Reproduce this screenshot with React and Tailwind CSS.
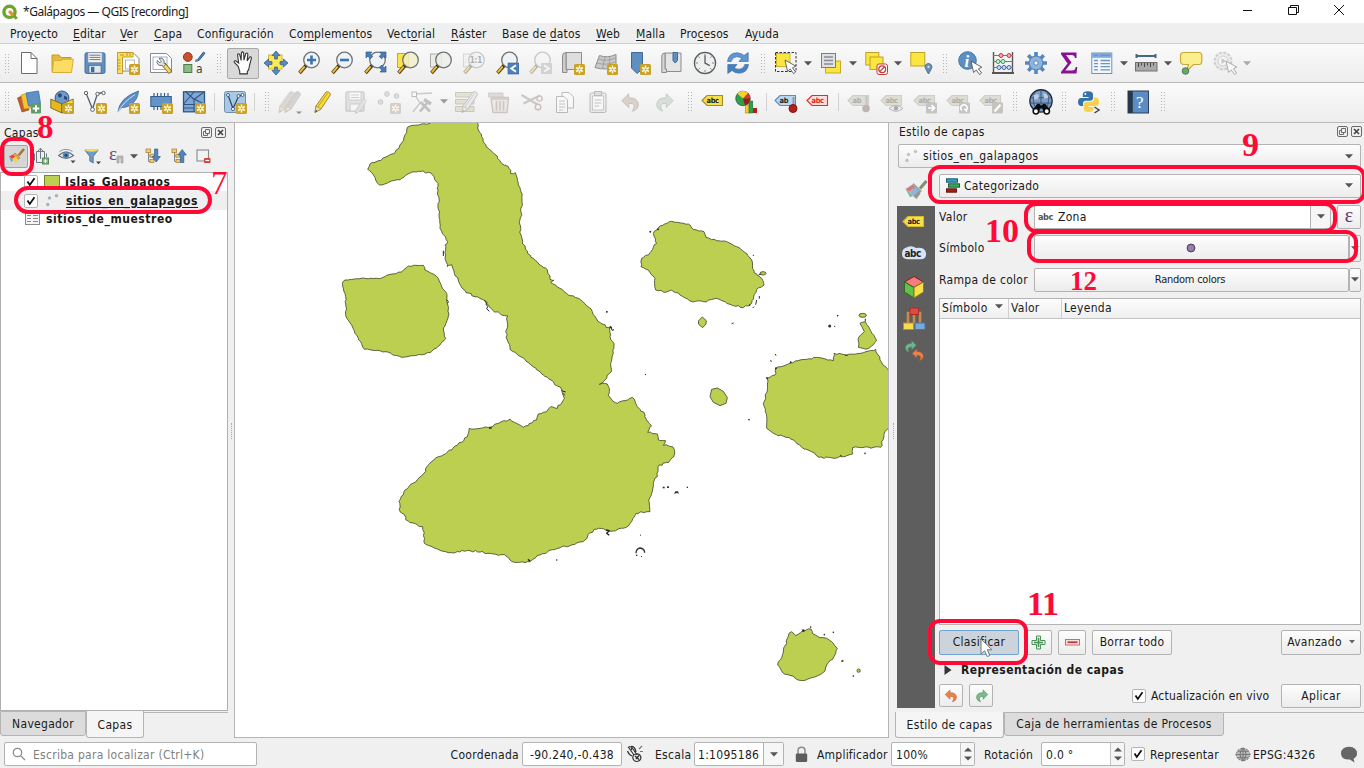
import React from "react";

/* ---------- shared drawing helpers ---------- */

const Svg = ({ children, size = 24, className = "" }) => (
  <svg width={size} height={size} viewBox="0 0 24 24" fill="none" className={"shrink-0 " + className}>
    {children}
  </svg>
);

const Star = ({ x = 13, y = 13, c = "#c9a227" }) => (
  <g transform={`translate(${x} ${y})`}>
    <rect width="11" height="11" rx="1.5" fill={c} />
    <path d="M5.5 1.6v7.8M2.1 3.5l6.8 4M8.9 3.5l-6.8 4" stroke="#fffbe0" strokeWidth="1.5" />
    <circle cx="5.5" cy="5.5" r="1" fill={c} />
  </g>
);

const Lens = ({ lens = "#eef2f4", ring = "#6f7375" }) => (
  <g>
    <path d="M9 14.5L2.5 22" stroke="#5b4310" strokeWidth="3.6" />
    <path d="M8 15.2L2.8 21.3" stroke="#f0c040" strokeWidth="1.8" />
    <path d="M9.6 13.6L8 15.6" stroke="#222" strokeWidth="3" />
    <circle cx="14.5" cy="9" r="7.8" fill={lens} fillOpacity="0.85" stroke={ring} strokeWidth="1.3" />
  </g>
);

const Pointer = ({ x = 12, y = 10 }) => (
  <path
    transform={`translate(${x} ${y})`}
    d="M0 0L2.6 11.5 5.2 9 8.6 13.6 10.6 12 7.4 7.8 10.8 6.2Z"
    fill="#fff"
    stroke="#555"
    strokeWidth="0.9"
  />
);

const Tag = ({ fill, stroke, text, children, textFill = "#222" }) => (
  <Svg>
    <path d="M1 10.5L6 5.5H21.5V15.5H6Z" fill={fill} stroke={stroke} strokeWidth="1.1" />
    <text x="5.6" y="13.2" fontFamily="DejaVu Sans, sans-serif" fontWeight="700" fontSize="7.4" letterSpacing="-0.4" fill={textFill}>
      {text}
    </text>
    {children}
  </Svg>
);

/* ---------- first toolbar icons ---------- */

const NewFile = () => (
  <Svg><path d="M4.5 1.5H14L20 7.5V22.5H4.5Z" fill="#fff" stroke="#6c6c6c" /><path d="M14 1.5V7.5H20" stroke="#6c6c6c" /></Svg>
);
const Folder = () => (
  <Svg>
    <path d="M2 20.5V4H9L11 6.5H21V10" fill="#e2ba3d" stroke="#c79a28" />
    <path d="M2.3 21.5L3.6 9.5H11.5L13.5 8.2H23.3L21.5 21.5Z" fill="#fcdc63" stroke="#d9ac35" />
  </Svg>
);
const Save = () => (
  <Svg>
    <rect x="2" y="1.8" width="20" height="20.6" rx="1.5" fill="#5f8fc0" stroke="#46719e" />
    <rect x="5" y="1.8" width="14" height="9.6" fill="#f4f4f4" stroke="#8b9aa8" strokeWidth=".7" />
    <path d="M6.5 4.2H17.5M6.5 6.4H17.5M6.5 8.6H17.5" stroke="#666" strokeWidth=".9" />
    <rect x="6" y="14.5" width="12" height="7.5" fill="#e4e7ea" stroke="#3b6190" strokeWidth=".6" />
    <rect x="8" y="15.8" width="3.4" height="5.4" fill="#3f6c9c" />
  </Svg>
);
const NewLayout = () => (
  <Svg>
    <path d="M3 2.5H18L23 7.5V20H3Z" fill="#fff" stroke="#888" />
    <path d="M1.5 1.5H17V6H6.5V22.5H1.5Z" fill="#fbe05b" stroke="#c39b2b" />
    <path d="M4 4H8M11 2V5M14 2V5M2 9H4.5M2 12H4.5M2 15H4.5M2 18H4.5" stroke="#a8821f" strokeWidth=".8" />
    <rect x="9.5" y="9" width="9" height="9" fill="#fff" stroke="#999" strokeWidth=".7" />
    <Star />
  </Svg>
);
const LayoutManager = () => (
  <Svg>
    <path d="M1.5 2.5H17.5L22.5 7.5V21.5H1.5Z" fill="#fff" stroke="#8a8a8a" />
    <rect x="4" y="6" width="14" height="12.5" stroke="#7e9fc4" strokeWidth=".8" />
    <path d="M14.5 13L21.5 21.5" stroke="#8a6914" strokeWidth="4.4" />
    <path d="M15.5 14.3L21 21" stroke="#f3d774" strokeWidth="2.8" />
    <path d="M8.3 9.5a3.6 3.6 0 0 0 4.6 4.8l1.6 1.4 2-1.9-1.6-1.7a3.6 3.6 0 0 0-5-4.6l2.6 2.6-1.6 1.8Z" fill="#e6e6e6" stroke="#666" strokeWidth=".9" />
  </Svg>
);
const StyleManager = () => (
  <Svg>
    <circle cx="5.8" cy="6" r="4.4" fill="#c8502c" stroke="#96371b" />
    <path d="M14.5 10L21.5 1 23 2.2 17 9.5Z" fill="#4b83b9" stroke="#2f5f90" />
    <path d="M13 11Q13 7.8 15.5 8 18 10.4 13 11Z" fill="#6a7fa0" />
    <rect x="1.8" y="13.5" width="8" height="8" fill="#8dbb86" stroke="#4b7d46" />
    <text x="14" y="22" fontFamily="DejaVu Sans, sans-serif" fontSize="12" letterSpacing="0" fill="#444">a</text>
  </Svg>
);
const Hand = () => (
  <Svg size={26}>
    <path
      d="M7.6 15.2L4 11.5Q3.4 9.6 5.2 10L8 12 7 4.6Q7.2 2.6 8.9 4L10.3 9.6 10.5 2.6Q11.4.8 12.6 2.6L12.9 9.4 14.5 3.3Q15.9 2 16.5 4L15.8 10 18.2 6.4Q19.8 5.8 19.7 7.8L18 14.5Q17.6 18.4 16 20V22H9V19.6Z"
      fill="#fff"
      stroke="#333"
      strokeWidth="1"
    />
  </Svg>
);
const PanSelection = () => (
  <Svg>
    <rect x="4.5" y="4" width="13.5" height="14" fill="#fcea4e" stroke="#d6b933" />
    <g fill="#5a8ac0" stroke="#35608f" strokeWidth=".8">
      <path d="M12 0L16 4.6H13.4V8H10.6V4.6H8Z" /><path d="M12 24L8 19.4H10.6V16H13.4V19.4H16Z" />
      <path d="M0 12L4.6 8V10.6H8V13.4H4.6V16Z" /><path d="M24 12L19.4 16V13.4H16V10.6H19.4V8Z" />
    </g>
  </Svg>
);
const ZoomIn = () => (<Svg><Lens /><path d="M14.5 4.5V13.5M10 9H19" stroke="#3c74ae" strokeWidth="2.6" /></Svg>);
const ZoomOut = () => (<Svg><Lens /><path d="M10 9H19" stroke="#3c74ae" strokeWidth="2.6" /></Svg>);
const ZoomFull = () => (
  <Svg>
    <Lens />
    <g fill="#4b7db4" stroke="#2e5c90" strokeWidth=".7">
      <path d="M3 1H9L7.2 2.8 9.8 5.4 7.4 7.8 4.8 5.2 3 7Z" /><path d="M23 1V7L21.2 5.2 18.6 7.8 16.2 5.4 18.8 2.8 17 1Z" />
      <path d="M23 21H17L18.8 19.2 16.2 16.6 18.6 14.2 21.2 16.8 23 15Z" />
    </g>
  </Svg>
);
const ZoomSel = () => (<Svg><rect x="1.5" y="2.5" width="11" height="14" fill="#fbe34a" stroke="#c9a72b" /><Lens lens="#f1efc8" /></Svg>);
const ZoomLayer = () => (<Svg><rect x="1.5" y="3" width="11" height="13" fill="#ececec" stroke="#a9a9a9" /><Lens lens="#ecefe9" /></Svg>);
const ZoomNative = () => (
  <Svg className="opacity-40">
    <rect x="1.5" y="3" width="11" height="13" fill="#ececec" stroke="#a9a9a9" />
    <Lens ring="#888" />
    <text x="7.8" y="12" fontFamily="DejaVu Sans, sans-serif" fontSize="8" letterSpacing="-0.2" fontWeight="700" fill="#444">1:1</text>
  </Svg>
);
const ZoomLast = () => (<Svg><Lens /><rect x="13" y="12" width="11" height="11" fill="#4f81b8" stroke="#35628f" strokeWidth=".6" /><path d="M21 14.2L16.2 17.5 21 20.8" stroke="#fff" strokeWidth="1.8" /></Svg>);
const ZoomNext = () => (<Svg className="opacity-35"><Lens /><rect x="13" y="12" width="11" height="11" fill="#999" /><path d="M16 14.2L20.8 17.5 16 20.8" stroke="#fff" strokeWidth="1.8" /></Svg>);
const NewMap = () => (
  <Svg><path d="M5 1.5H20.5V18.5H5Z" fill="#dedede" stroke="#8c8c8c" /><path d="M5 1.5Q1.5 1.5 1.5 5V21.5H6V18.5H5Z" fill="#cdcdcd" stroke="#8c8c8c" /><Star /></Svg>
);
const New3D = () => (
  <Svg>
    <path d="M1 16.5L5.5 4.5Q13 7.5 22 3.5V15Q12 20 1 16.5Z" fill="#c9c9c9" stroke="#8e8e8e" />
    <path d="M3 12Q12 15 22 10.5M4.4 8Q12 11 22 7M8.5 17.5L11 6M15 17L16 5.5" stroke="#999" strokeWidth=".8" />
    <Star />
  </Svg>
);
const NewBookmark = () => (<Svg><path d="M4.5 1.5H15.5V18L10 22.5 4.5 17Z" fill="#5f8fc0" stroke="#3d6a99" /><Star /></Svg>);
const ShowBookmarks = () => (
  <Svg>
    <path d="M5 2H21V20.5H5Z" fill="#e4e4e4" stroke="#8c8c8c" /><path d="M5 2Q1.8 2 1.8 5V21.5H6.5V18H5Z" fill="#d6d6d6" stroke="#8c8c8c" />
    <path d="M13 1.5H17.5V9.5L15.2 12 13 9.5Z" fill="#5f8fc0" stroke="#3d6a99" />
  </Svg>
);
const Clock = () => (
  <Svg>
    <circle cx="12" cy="12" r="10.6" fill="#eeefef" stroke="#555b60" strokeWidth="1.2" />
    <path d="M12 2.5V5M12 19V21.5M2.5 12H5M19 12H21.5M5.3 5.3L6.8 6.8M18.7 5.3L17.2 6.8M5.3 18.7L6.8 17.2M18.7 18.7L17.2 17.2" stroke="#888" />
    <path d="M12 4.5V12L16.8 14.6" stroke="#555b60" strokeWidth="1.3" />
  </Svg>
);
const Refresh = () => (
  <Svg>
    <path d="M1.5 10.5Q2.5 2 11 1.8 15.3 1.9 18 4.5L22.2 1.5V10.5H13L15.6 7.3Q13.5 5.6 10.5 5.8 6 6.2 5.2 10.5Z" fill="#6095cf" stroke="#3f74b0" strokeWidth=".7" />
    <path d="M22.5 13.5Q21.5 22 13 22.2 8.7 22.1 6 19.5L1.8 22.5V13.5H11L8.4 16.7Q10.5 18.4 13.5 18.2 18 17.8 18.8 13.5Z" fill="#4a7fbd" stroke="#3f74b0" strokeWidth=".7" />
  </Svg>
);
const SelectFeat = () => (
  <Svg><rect x="1.5" y="1.5" width="20.5" height="19" stroke="#333" strokeDasharray="2.5 1.5" /><rect x="2.5" y="2.5" width="13.5" height="13" fill="#fbe53f" stroke="#cdb22d" /><Pointer x={11} y={9} /></Svg>
);
const SelectValue = () => (
  <Svg><rect x="6.5" y="10" width="15" height="12" fill="#fbe53f" stroke="#c8aa2a" /><rect x="2.5" y="2.5" width="14" height="14" fill="#dfe1e4" stroke="#7a7e84" /><path d="M5 6H14M5 9.5H14M5 13H14" stroke="#888c94" strokeWidth="1.3" /></Svg>
);
const Deselect = () => (
  <Svg>
    <rect x="1.8" y="1.5" width="13" height="12.5" fill="#fbe53f" stroke="#c0a228" /><rect x="6" y="6" width="13" height="12.5" fill="#fbe53f" stroke="#c0a228" />
    <rect x="13" y="13" width="10.5" height="10.5" rx="2" fill="#fff" stroke="#c53b3b" /><circle cx="18.2" cy="18.2" r="3.4" stroke="#c53b3b" strokeWidth="1.3" /><path d="M15.8 20.6L20.6 15.8" stroke="#c53b3b" strokeWidth="1.3" />
  </Svg>
);
const SelectLoc = () => (
  <Svg><rect x="1.8" y="1.5" width="14" height="13.5" fill="#fbe53f" stroke="#c0a228" /><path d="M19.5 23L16.5 17.5A3.4 3.4 0 1 1 22.5 17.5Z" fill="#6b92b5" stroke="#48708f" /><circle cx="19.5" cy="15.8" r="1.1" fill="#dfe9f2" /></Svg>
);
const Identify = () => (
  <Svg>
    <circle cx="9.5" cy="9.5" r="8.8" fill="#5b8fc4" stroke="#4477aa" />
    <text x="6.5" y="15.5" fontFamily="Liberation Serif, serif" fontStyle="italic" fontWeight="700" fontSize="17" fill="#fff">i</text>
    <Pointer x={13} y={10} />
  </Svg>
);
const Abacus = () => (
  <Svg>
    <path d="M2.5 1V22M21.5 1V22" stroke="#555" strokeWidth="1.4" /><path d="M2 4.5H22M2 10.5H22M2 16.5H22" stroke="#777" /><path d="M1 22H23" stroke="#555" strokeWidth="2" />
    <g stroke="#c03a3a" fill="#f1b0b0"><circle cx="10" cy="4.5" r="2" /><circle cx="18" cy="4.5" r="2" /></g>
    <g stroke="#3b9350" fill="#d1eed5"><circle cx="7" cy="10.5" r="2" /><circle cx="12" cy="10.5" r="2" /></g>
    <g stroke="#3b6ba3" fill="#cadef2"><circle cx="8" cy="16.5" r="2" /><circle cx="13" cy="16.5" r="2" /><circle cx="18" cy="16.5" r="2" /></g>
  </Svg>
);
const Gear = () => (
  <Svg>
    <path d="M12 1V23M1 12H23M4.2 4.2L19.8 19.8M19.8 4.2L4.2 19.8" stroke="#5786bb" strokeWidth="3.6" />
    <circle cx="12" cy="12" r="7" fill="#8fb4dc" stroke="#5786bb" strokeWidth="1.2" /><circle cx="12" cy="12" r="2.2" fill="#f4f4f4" stroke="#5786bb" />
  </Svg>
);
const Sigma = () => (
  <Svg><path d="M4 1.5H19.5V7H18Q17.5 4 14.5 4H9L14.5 11.5 8.2 19.5H15.5Q18 19.5 18.8 16H20.3L19.5 22.5H4V21L10.6 12.5 4 3.2Z" fill="#8a1093" /></Svg>
);
const Table = () => (
  <Svg>
    <rect x="1.8" y="2" width="20" height="20.5" fill="#f3f7fb" stroke="#6c93bd" /><rect x="2" y="2" width="19.6" height="4.8" fill="#7faadb" />
    <path d="M4 4.4H8M10.5 4.4H20M4 9.5H8M10.5 9.5H20M4 12.6H8M10.5 12.6H20M4 15.7H8M10.5 15.7H20M4 18.8H8M10.5 18.8H20" stroke="#6b95c7" strokeWidth="1.3" />
  </Svg>
);
const Ruler = () => (
  <Svg><path d="M2.5 5H21.5M2.5 3V7M21.5 3V7" stroke="#45677f" strokeWidth="2" /><rect x="1.5" y="11.5" width="21.5" height="8.5" fill="#a9a9a9" stroke="#707070" /><path d="M4.5 12V16M7.5 12V14.5M10.5 12V16M13.5 12V14.5M16.5 12V16M19.5 12V14.5" stroke="#4a4a4a" /></Svg>
);
const Tip = () => (
  <Svg><path d="M5 1.5H20Q22.8 1.5 22.8 4.5V10Q22.8 13.5 20 13.5H14.5L7.5 20.5 9.5 13.5H5Q1.5 13.5 1.5 10V4.5Q1.5 1.5 5 1.5Z" fill="#fbee8c" stroke="#c7a83a" strokeWidth="1.2" /><circle cx="6.5" cy="20" r="3.3" fill="#6fa56f" stroke="#4a7b55" /></Svg>
);
const Action = () => (
  <Svg className="opacity-50"><circle cx="10" cy="10" r="8.4" fill="#e4e4e4" stroke="#aaa" strokeWidth="2" strokeDasharray="3 1.4" /><circle cx="10" cy="10" r="5" fill="#f6f6f6" stroke="#aaa" /><path d="M8.5 7L13 10 8.5 13Z" fill="#999" /><Pointer x={13} y={10} /></Svg>
);

/* ---------- second toolbar icons ---------- */

const DataSource = () => (
  <Svg>
    <path d="M.5 8L7 5 12 20 5 22Z" fill="#c65a2c" stroke="#963c16" strokeWidth=".6" /><path d="M4 5L11 3 14 18 7 19Z" fill="#f0c53a" stroke="#b98d1a" strokeWidth=".6" />
    <path d="M9 3L21.5 1 23.5 13.5 11.5 16Z" fill="#5f90c6" stroke="#3f6d9f" strokeWidth=".8" /><rect x="14" y="13.5" width="10" height="10" rx="1" fill="#5f9c6a" /><path d="M19 15.2V21.8M15.7 18.5H22.3" stroke="#fff" strokeWidth="2" />
  </Svg>
);
const GeoPackage = () => (
  <Svg>
    <circle cx="12" cy="8" r="7" fill="#6e99c8" stroke="#355b86" /><path d="M8 4Q12 2 12 6 9 9 8 6ZM14 6Q18 6 17 10L14 9Z" fill="#274b77" />
    <path d="M.8 9L12 14V23L.8 18Z" fill="#e5b91e" stroke="#6e5609" strokeWidth=".8" /><path d="M12 14L23.2 9V18L12 23Z" fill="#f7db4b" stroke="#6e5609" strokeWidth=".8" /><Star x={13} y={13} />
  </Svg>
);
const VNodes = ({ s = "#5a6268" }) => (
  <g><path d="M3 3L9.5 19 14 5Q16 2 20 3" stroke={s} strokeWidth="1.3" /><g fill="#fff" stroke={s}><circle cx="3" cy="3" r="1.7" /><circle cx="9.5" cy="19.5" r="1.9" /><circle cx="14.5" cy="4" r="1.7" /><circle cx="20.5" cy="3" r="1.7" /></g></g>
);
const Shape = () => (<Svg><VNodes /><Star /></Svg>);
const Feather = () => (
  <Svg><path d="M2 22Q3 8 22.5 1 22 10 14 15.5 9 18 5.5 17.5Z" fill="#5f8fc6" stroke="#3a679b" strokeWidth=".8" /><path d="M1.5 23Q7 12 19 4.5" stroke="#cfe0f2" strokeWidth="1" /><Star /></Svg>
);
const Chip = () => (
  <Svg><path d="M5 3V20M8.5 3V20M12 3V20M15.5 3V20M19 3V20" stroke="#335f8e" strokeWidth="1.2" /><rect x="1.8" y="6.5" width="20.5" height="10" fill="#6394c8" stroke="#335f8e" /><Star /></Svg>
);
const Mesh = () => (
  <Svg><rect x="1.5" y="1.8" width="21" height="20" fill="#7ea7d6" stroke="#2f5680" strokeWidth="1.3" /><path d="M1.5 14.5H22.5M12 14.5V22M1.5 14L12 2M4 2L12 9.5 22 2M12 14.5V9L22 14M1.5 18H12" stroke="#2f5680" strokeWidth="1.1" /><Star /></Svg>
);
const Virtual = () => (
  <Svg><rect x="1.5" y="1.5" width="21" height="21" rx="2" fill="#a9c8e6" stroke="#6f8ead" /><path d="M5 5L10 18.5 15.5 6.5 19 5" stroke="#2d4d6f" strokeWidth="1.3" /><g fill="#fff" stroke="#2d4d6f" strokeWidth=".8"><circle cx="5" cy="5" r="1.5" /><circle cx="10" cy="19" r="1.6" /><circle cx="15.5" cy="6" r="1.5" /><circle cx="19.5" cy="5" r="1.5" /></g><Star /></Svg>
);
const PencilShape = ({ x = 0, fill = "#f5d93e", edge = "#a78a1e", tip = "#333" }) => (
  <g transform={`translate(${x} 0)`}><path d="M4 22.5L5 16 15 2Q18.5 1 19.5 4.6L10 19Z" fill={fill} stroke={edge} strokeWidth="1" /><path d="M4 22.5L5 16 10 19Z" fill="#e9dcc0" stroke={edge} strokeWidth=".7" /><path d="M4 22.5L5 20 6.3 21Z" fill={tip} /><path d="M6.8 17L16.6 3.2" stroke={edge} strokeWidth=".7" /></g>
);
const CurrentEdits = () => (<Svg className="opacity-80"><PencilShape x={-3} fill="#d7d4d1" edge="#c9c5c2" tip="#bbb" /><PencilShape x={3} fill="#d0cdca" edge="#c2beba" tip="#bbb" /><path d="M18 21.5H24L21 24Z" fill="#777" /></Svg>);
const ToggleEdit = () => (<Svg><PencilShape /></Svg>);
const SaveEdits = () => (<Svg className="opacity-30"><rect x="2" y="2" width="18" height="19" rx="1" fill="#bbb" stroke="#777" strokeWidth="1.4" /><rect x="5" y="2" width="12" height="8" fill="#fff" stroke="#777" /><path d="M7 5H15M7 7.5H15" stroke="#777" /><rect x="6" y="14" width="10" height="7" fill="#fff" stroke="#777" /><g transform="translate(9 8) scale(.68)"><PencilShape fill="#ccc" edge="#666" /></g></Svg>);
const AddPoint = () => (<Svg className="opacity-80"><g fill="#d9dadb" stroke="#bcbcbc"><circle cx="3.5" cy="12" r="2.3" /><circle cx="10" cy="4" r="2.3" /><circle cx="19.5" cy="6" r="2.3" /></g><Star c="#cbc7c2" /></Svg>);
const VertexTool = () => (<Svg className="opacity-35"><path d="M4 4L22 3M4 4L10 13 3 22" stroke="#777" strokeWidth="1.3" /><rect x="2" y="2" width="4.5" height="4.5" fill="#fff" stroke="#555" /><path d="M10 21.5L17.5 12.5M10.5 12L20 21.5" stroke="#666" strokeWidth="2.6" /><path d="M14 9.5L21 14" stroke="#666" strokeWidth="3.4" /></Svg>);
const ModifyAttrs = () => (<Svg className="opacity-40"><path d="M1.5 2.5H20V7H1.5ZM1.5 9.5H20V14H1.5ZM1.5 16.5H20V21.5H1.5Z" fill="#c9c6a4" stroke="#8a8878" /><PencilShape x={4} fill="#ddd" edge="#777" /></Svg>);
const Trash = () => (<Svg className="opacity-35"><path d="M1.5 3H16V7H1.5Z" fill="#bba5a0" stroke="#99827c" /><path d="M4 9H21.5L20 22.5H6Z" fill="#dcd2cf" stroke="#8f7570" strokeWidth="1.4" /><path d="M3.5 7.5H22M9.5 11V20.5M13 11V20.5M16.5 11V20.5" stroke="#8f7570" strokeWidth="1.6" /></Svg>);
const Cut = () => (<Svg className="opacity-35"><path d="M1.5 5L17.5 14.5M3.5 13.5L20 5.5" stroke="#777" strokeWidth="2.2" /><circle cx="19.5" cy="8.5" r="2.6" stroke="#8b6060" strokeWidth="1.4" /><circle cx="18" cy="17" r="2.8" stroke="#8b6060" strokeWidth="1.4" /></Svg>);
const Copy = () => (<Svg className="opacity-40"><path d="M9 2.5H16L20.5 7V18H9Z" fill="#fff" stroke="#666" /><path d="M3.5 6.5H11L14.5 10V22.5H3.5Z" fill="#fff" stroke="#666" /><path d="M6 11H12M6 14H12M6 17H12M6 20H10" stroke="#777" /></Svg>);
const Paste = () => (<Svg className="opacity-40"><rect x="4" y="3" width="16" height="19.5" rx="1.5" fill="#ddd" stroke="#666" /><rect x="6.5" y="6" width="11" height="14" fill="#fff" stroke="#777" strokeWidth=".8" /><rect x="8.5" y="1.5" width="7" height="4" fill="#bbb" stroke="#666" /><path d="M8.5 10H15.5M8.5 13H15.5M8.5 16H13" stroke="#777" /></Svg>);
const UndoPath = ({ fill, stroke }) => (
  <path d="M2 10.5L9.5 3V7.5Q19.5 7 20 15 19.6 20.5 13.5 22 16 18.5 15.4 15.8 14.5 13 9.5 13.3V18Z" fill={fill} stroke={stroke} strokeWidth="1" />
);
const Undo = () => (<Svg size={22}><UndoPath fill="#d9d1cc" stroke="#c6bcb6" /></Svg>);
const Redo = () => (<Svg size={22}><g transform="translate(24 0) scale(-1 1)"><UndoPath fill="#d8ddd9" stroke="#c0c9c2" /></g></Svg>);
const DiagramIcon = () => (
  <Svg>
    <circle cx="9" cy="8.5" r="7.3" fill="#2ca04a" stroke="#333" strokeWidth=".6" /><path d="M9 8.5V1.2A7.3 7.3 0 0 1 16.2 8.5Z" fill="#e23131" /><path d="M9 8.5L3.4 3.8A7.3 7.3 0 0 1 14 3Z" fill="#f6d12e" /><path d="M9 8.5H16.3A7.3 7.3 0 0 1 11 15.5Z" fill="#a81717" />
    <rect x="11.5" y="15" width="3.5" height="8" fill="#f6d12e" stroke="#8a7416" strokeWidth=".5" /><rect x="15" y="11" width="3.8" height="12" fill="#2ca04a" stroke="#1d6b31" strokeWidth=".5" /><rect x="19" y="18" width="4" height="5" fill="#b91c1c" />
  </Svg>
);
const LabelYellow = () => <Tag fill="#f7de4b" stroke="#a48b22" text="abc" />;
const LabelPin = () => (<Tag fill="#b9d6f3" stroke="#5d8cbd" text="ab"><path d="M19.5 7V15" stroke="#999" strokeWidth="2" /><circle cx="19" cy="18.5" r="4" fill="#b32020" stroke="#821212" /></Tag>);
const LabelRed = () => <Tag fill="#ffdcdc" stroke="#e22b2b" text="abc" textFill="#e01b1b" />;
const GrayTag = ({ kind }) => (
  <Tag fill="#dddcd5" stroke="#cfcec7" text={kind === "pin" ? "ab" : "abc"} textFill="#aeada8">
    {kind === "pin" && <><path d="M19.5 6V15" stroke="#c4c4c4" strokeWidth="2" /><circle cx="19" cy="18.5" r="3.8" fill="#c2b3b3" /></>}
    {kind === "eye" && <><path d="M9 18.5Q16 12.5 23 18.5 16 24 9 18.5Z" fill="#eee" stroke="#b5b5b5" /><circle cx="16" cy="18.3" r="2.2" fill="#aaa" /></>}
    {kind === "move" && <><rect x="13" y="12.5" width="11" height="11" rx="1" fill="#c4c4c4" /><path d="M15 18H21M18.5 15L21.5 18 18.5 21" stroke="#fff" strokeWidth="1.7" /></>}
    {kind === "rotate" && <><rect x="13" y="12.5" width="11" height="11" rx="1" fill="#c4c4c4" /><path d="M16 20.5A3.2 3.2 0 1 1 20.5 20V22M18 19.5H21" stroke="#fff" strokeWidth="1.5" /></>}
    {kind === "edit" && <><rect x="13" y="12.5" width="11" height="11" rx="1" fill="#c6c4be" /><path d="M15.5 21.5L21.5 14.8" stroke="#fff" strokeWidth="2.2" /></>}
  </Tag>
);
const MetaSearch = () => (
  <Svg size={26}>
    <circle cx="12" cy="11" r="10.3" fill="#7c9dc4" stroke="#1e2c3e" strokeWidth="1.2" />
    <path d="M2.5 8H21.5M2 13H22M12 1V15M6 3Q3.5 9 6 16M18 3Q20.5 9 18 16" stroke="#36506f" strokeWidth=".8" />
    <path d="M5 6Q9 3 10 6T6 10ZM14 4Q18 4 19 8L15 9Z" fill="#b9cde4" />
    <path d="M8.5 13.5H10.5L11.5 15H13L14 13.5H16L20.5 19.5 15 21.5 13 18H11.5L9.5 21.5 4 19.5Z" fill="#0b0b0b" />
    <circle cx="7.3" cy="20.6" r="2.5" fill="#fff" stroke="#0b0b0b" strokeWidth="1.4" /><circle cx="17.3" cy="20.6" r="2.5" fill="#fff" stroke="#0b0b0b" strokeWidth="1.4" />
  </Svg>
);
const Python = () => (
  <Svg>
    <path d="M11 1.2Q5.8 1.2 5.8 4.2V7H11.5V8H3.6Q1 8.4 1 12T3.8 16H6V13.4Q6 11 8.8 10.8H13.2Q16 10.4 16 8V4.2Q15.8 1.2 11 1.2Z" fill="#3572a5" /><circle cx="8.4" cy="4" r="1" fill="#fff" />
    <path d="M11.5 22Q6.8 22 6.8 19V15Q6.8 12 9.8 11.8H14Q17 11.5 17 8.5V7.5H19Q22 8 22 12T18.8 16H11.5V17H16.5V19Q16.2 22 11.5 22Z" fill="#fad14a" />
    <path d="M17.5 17L22 20 17.5 23" stroke="#444" strokeWidth="1.5" />
  </Svg>
);
const Help = () => (
  <Svg><rect x="2" y="1" width="20.5" height="22" fill="#5b8dc4" stroke="#2a3f58" /><rect x="2" y="1" width="4.8" height="22" fill="#28384c" /><text x="10" y="17.5" fontFamily="Liberation Serif, serif" fontSize="17" fill="#fff">?</text></Svg>
);

/* ---------- toolbar pieces ---------- */

const Handle = ({ className }) => (
  <div className={"flex h-6 shrink-0 items-center justify-center " + className}>
    <svg width="5" height="19" viewBox="0 0 5 19">
      {[0, 3, 6, 9, 12, 15, 18].map((y) => (
        <g key={y} fill="#b5b5b5"><rect x="0" y={y} width="1" height="1" /><rect x="3" y={y} width="1" height="1" /></g>
      ))}
    </svg>
  </div>
);
const Cell = ({ children, className = "w-[33px]" }) => <div className={"flex shrink-0 items-center justify-center " + className}>{children}</div>;
const Tri = ({ className = "w-3", fill = "#555" }) => (
  <div className={"flex shrink-0 items-center justify-center " + className}>
    <svg width="8" height="5" viewBox="0 0 8 5"><path d="M0 .3H8L4 4.6Z" fill={fill} /></svg>
  </div>
);
const Sep = ({ className }) => <div className={"flex shrink-0 justify-center " + className}><div className="h-[18px] w-px bg-[#d2d2d2]" /></div>;

const menu = [
  ["Pro", "y", "ecto", "w-[63px]"],
  ["", "E", "ditar", "w-[47px]"],
  ["", "V", "er", "w-[34px]"],
  ["", "C", "apa", "w-[43px]"],
  ["Confi", "g", "uración", "w-[92px]"],
  ["Co", "m", "plementos", "w-[98px]"],
  ["Vect", "o", "rial", "w-[64px]"],
  ["", "R", "áster", "w-[51px]"],
  ["Base de ", "d", "atos", "w-[94px]"],
  ["", "W", "eb", "w-[40px]"],
  ["", "M", "alla", "w-[44px]"],
  ["Pro", "c", "esos", "w-[65px]"],
  ["A", "y", "uda", "w-[40px]"],
];

const DockButtons = ({ className }) => (
  <div className={"flex gap-[3px] " + className}>
    <svg width="11" height="11" viewBox="0 0 11 11" fill="none" stroke="#6a6a6a"><rect x=".5" y=".5" width="10" height="10" rx="1.5" /><path d="M4.5 2.5H8.5V6.5H4.5ZM4.5 4.5H2.5V8.5H6.5V6.5" /></svg>
    <svg width="11" height="11" viewBox="0 0 11 11" fill="none" stroke="#6a6a6a"><rect x=".5" y=".5" width="10" height="10" rx="1.5" /><path d="M3 3L8 8M8 3L3 8" stroke="#444" strokeWidth="1.7" /></svg>
  </div>
);

const Check = () => (
  <span className="flex h-[14px] w-[14px] shrink-0 items-center justify-center rounded-[2px] border border-[#b4b4b4] bg-white">
    <svg width="10" height="10" viewBox="0 0 10 10" fill="none"><path d="M1.5 4.5L3.8 8 8.5 1.2" stroke="#111" strokeWidth="1.8" /></svg>
  </span>
);

/* ---------- left dock ---------- */

const LayersPanel = () => (
  <div className="flex w-[228px] shrink-0 flex-col">
    <div className="flex h-[19px] items-center justify-between pl-1 pr-[2px]">
      <span>Capas</span>
      <DockButtons className="-mt-px" />
    </div>
    <div className="flex h-[28px] items-center pl-1">
      <div className="flex h-[23px] w-[24px] items-center justify-center rounded-[2px] border border-[#a2a2a2] bg-[#d6d6d6]">
        <svg width="17" height="17" viewBox="0 0 17 17"><path d="M16 1L10.5 7.5" stroke="#a8762f" strokeWidth="2.6" /><path d="M7 5L12 10 9 12 4.5 8Z" fill="#e2a345" stroke="#996520" strokeWidth=".5" /><path d="M1 8.5L5 6.5 8 10 6 12Z" fill="#e24b3a" /><path d="M4 11L7.5 8.5 10.5 12 7.5 15Z" fill="#f4d24a" /><path d="M1 8.5L5 12 3.5 14Z" fill="#6a93d8" /></svg>
      </div>
      <Cell className="w-[26px]"><svg width="16" height="18" viewBox="0 0 16 18" fill="none" stroke="#6b7a85"><path d="M3.5 4.5V15.5H11.5V4.5ZM1.5 6.5V13.5M13.5 6.5V10M7.5 1.5V12M5 4L7.5 1.2 10 4" /><rect x="9.5" y="11" width="6" height="6" fill="#7fb286" stroke="#558a5d" /><path d="M12.5 12.2V15.8M10.7 14H14.3" stroke="#fff" /></svg></Cell>
      <Cell className="w-[26px]"><svg width="18" height="16" viewBox="0 0 18 16" fill="none"><path d="M.7 7.5Q8 .5 15.5 7.5 8 13.5.7 7.5Z" fill="#eef2f6" stroke="#667784" strokeWidth="1.2" /><circle cx="8" cy="7.3" r="3.3" fill="#5f88b4" /><circle cx="8" cy="7.3" r="1.4" fill="#26425e" /><path d="M1.5 3.5Q8-.8 14.5 3.5" stroke="#8b98a3" /><path d="M12.5 12.5H17.5L15 15.2Z" fill="#444" /></svg></Cell>
      <Cell className="w-[25px]"><svg width="17" height="17" viewBox="0 0 17 17"><path d="M.8 2H14.2L9.2 8.5V15L5.8 13V8.5Z" fill="#6f9ccb" stroke="#41698f" strokeWidth=".8" /><ellipse cx="7.5" cy="2.3" rx="6.6" ry="1.5" fill="#f1d862" /><path d="M12 13.5H17L14.5 16.2Z" fill="#444" /></svg></Cell>
      <div className="flex w-[23px] items-center justify-center">
        <span className="-mt-1 text-[19px] leading-[18px] tracking-normal text-[#6d4a78] [font-family:'Liberation_Serif',serif]">ε</span>
        <svg className="-ml-px mt-[7px]" width="8" height="9" viewBox="0 0 8 9"><path d="M1 1H7V8H5V3H3V8H1Z" fill="#bbb" stroke="#999" strokeWidth=".6" /></svg>
      </div>
      <Tri className="w-[12px]" />
      <Cell className="w-[26px]"><svg width="16" height="16" viewBox="0 0 16 16"><path d="M3.5 3V13.5H6M3.5 8H6" stroke="#888" fill="none" /><rect x="1" y="1" width="4.5" height="3.6" fill="#f2cf73" stroke="#a8863a" strokeWidth=".8" /><rect x="5" y="6.2" width="4" height="3" fill="#f2cf73" stroke="#a8863a" strokeWidth=".8" /><rect x="5" y="11.5" width="4" height="3" fill="#f2cf73" stroke="#a8863a" strokeWidth=".8" /><path d="M9.5 1H12.8V8.5H15.4L11.2 14 7 8.5H9.5Z" fill="#5483b5" stroke="#34608e" strokeWidth=".7" /></svg></Cell>
      <Cell className="w-[25px]"><svg width="16" height="16" viewBox="0 0 16 16"><path d="M3.5 3V13.5H6M3.5 8H6" stroke="#888" fill="none" /><rect x="1" y="1" width="4.5" height="3.6" fill="#f2cf73" stroke="#a8863a" strokeWidth=".8" /><rect x="5" y="6.2" width="4" height="3" fill="#f2cf73" stroke="#a8863a" strokeWidth=".8" /><rect x="5" y="11.5" width="4" height="3" fill="#f2cf73" stroke="#a8863a" strokeWidth=".8" /><path d="M9.5 14.5H12.8V7H15.4L11.2 1.5 7 7H9.5Z" fill="#5483b5" stroke="#34608e" strokeWidth=".7" /></svg></Cell>
      <Cell className="w-[24px]"><svg width="15" height="15" viewBox="0 0 15 15"><rect x="1" y="1" width="11.5" height="11" fill="#f2f2f2" stroke="#8a8a8a" strokeWidth="1.1" /><rect x="8" y="9" width="6.5" height="5" rx="1" fill="#d23a3a" /><path d="M9.3 11.5H13.3" stroke="#fff" strokeWidth="1.3" /></svg></Cell>
    </div>
    <div className="mt-[2px] h-[539px] border border-[#b0b0b0] bg-white font-bold tracking-[0.57px]">
      <div className="flex h-[18px] items-center overflow-hidden pl-[23px]">
        <Check />
        <span className="ml-[6px] mr-[5px] h-[15px] w-[16px] border border-[#76822f] bg-[#bccf51]" />
        <span>Islas_Galapagos</span>
      </div>
      <div className="flex h-[19px] items-center bg-[#efefef] pl-[23px]">
        <Check />
        <svg className="ml-[6px] mr-[5px]" width="17" height="14" viewBox="0 0 17 14" fill="#a7bccb" stroke="#8197a8" strokeWidth=".6"><circle cx="5.5" cy="4" r="1.3" /><circle cx="12.5" cy="1.8" r="1.3" /><circle cx="3.8" cy="10.5" r="1.3" /></svg>
        <span className="underline underline-offset-2">sitios_en_galapagos</span>
      </div>
      <div className="flex h-[17px] items-center pl-[24px]">
        <svg className="mr-[6px]" width="15" height="13" viewBox="0 0 15 13" fill="none" stroke="#8a8a8a"><rect x=".5" y=".5" width="14" height="12" fill="#f4f4f4" /><path d="M2 3.5H6M8 3.5H13M2 6.5H6M8 6.5H13M2 9.5H6M8 9.5H13" /></svg>
        <span>sitios_de_muestreo</span>
      </div>
    </div>
    <div className="flex h-[27px] items-start">
      <div className="flex h-[25px] w-[86px] items-center justify-center rounded-b-[3px] border border-[#b5b5b5] bg-[#dcdcdc]">Navegador</div>
      <div className="flex h-[27px] w-[58px] items-center justify-center rounded-b-[3px] border border-t-0 border-[#b5b5b5] bg-[#f5f5f5] pt-[2px]">Capas</div>
      <div className="mt-px h-px flex-1 bg-[#b5b5b5]" />
    </div>
  </div>
);

/* ---------- map canvas ---------- */

const isabela = "442 0 445 30 455 50 460 66 475 85 495 103 515 130 535 140 542 160 556 158 562 175 565 195 573 215 576 245 574 280 568 308 573 345 578 372 592 393 610 415 635 438 652 450 660 468 660 478 672 480 662 487 690 505 720 527 745 535 765 552 787 575 800 597 828 622 843 618 840 650 848 665 852 685 850 700 844 725 844 755 830 775 808 793 818 790 832 792 838 805 834 825 848 843 862 850 885 842 907 832 922 860 945 885 950 900 965 918 953 937 982 942 985 960 1007 962 1000 976 1028 980 1034 1002 1015 1028 987 1035 982 1070 970 1090 965 1120 956 1140 960 1175 918 1180 895 1218 850 1233 805 1225 792 1228 765 1260 718 1278 695 1280 630 1305 600 1325 585 1328 545 1324 528 1308 480 1300 420 1292 355 1298 315 1285 283 1270 278 1220 240 1208 210 1175 207 1145 225 1110 275 1068 298 1032 325 1010 365 990 412 950 418 925 480 922 505 910 540 897 580 922 620 900 625 882 650 875 662 860 682 865 703 835 695 810 670 785 640 765 585 718 540 688 532 660 529 630 533 588 515 585 490 572 465 543 435 530 408 518 388 490 373 460 366 435 352 440 345 415 345 375 353 365 330 325 327 290 324 190 312 170 295 157 265 154 245 157 215 175 185 183 148 195 135 172 113 148 120 132 165 112 195 98 210 75 230 38 232 22 250 16 300 10 300 0";
const fernandina = "37 490 45 480 80 476 155 474 180 463 215 456 235 438 280 436 285 450 310 462 325 475 335 500 350 520 352 550 357 582 348 610 340 630 347 655 330 675 300 698 250 707 215 712 165 695 103 688 92 665 75 640 65 615 48 590 47 530";
const santiago = "70 70 90 48 125 34 175 42 190 58 222 65 228 82 260 92 290 95 320 110 350 130 365 150 372 188 395 205 402 225 380 238 365 280 340 293 300 283 260 265 220 275 180 273 150 255 125 240 105 247 77 240 75 205 55 180 33 170 35 145 55 135 80 100";
const santaCruz = "437 475 475 462 510 450 560 442 610 452 612 430 650 435 700 428 737 418 750 450 775 480 800 500 800 640 776 655 765 665 752 712 668 713 668 732 612 745 567 742 545 725 515 712 490 690 430 670 410 655 410 620 400 580 412 540 412 505 435 495";
const baltra = "690 340 706 335 722 362 740 392 725 408 708 418 685 412 686 382 703 365";
const floreana = "72 55 80 50 92 62 112 48 138 42 142 55 165 68 185 70 205 85 217 100 207 125 185 150 180 168 158 182 120 196 95 193 78 182 52 172 38 150 50 128 55 105 62 90";

const coast = (text, amp) => {
  const n = text.split(" ").map(Number);
  const pts = [];
  for (let i = 0; i < n.length; i += 2) pts.push([n[i], n[i + 1]]);
  let seed = 7;
  const rnd = () => {
    seed = (seed * 16807) % 2147483647;
    return seed / 2147483647 - 0.5;
  };
  const out = [];
  pts.forEach(([x, y], i) => {
    const [nx, ny] = pts[(i + 1) % pts.length];
    const steps = Math.max(1, Math.round(Math.hypot(nx - x, ny - y) / 8));
    for (let k = 0; k < steps; k++) {
      const j = k === 0 ? 0 : amp;
      out.push(`${(x + ((nx - x) * k) / steps + rnd() * j).toFixed(1)} ${(y + ((ny - y) * k) / steps + rnd() * j).toFixed(1)}`);
    }
  });
  return "M" + out.join("L") + "Z";
};

const MapCanvas = () => (
  <div className="w-[655px] shrink-0 border-b border-l border-r border-[#b5b5b5] bg-white">
    <svg width="653" height="615" viewBox="235 123 653 615" fill="#bccf51" stroke="#3c4322" strokeWidth="2.4" strokeLinejoin="round">
      <g transform="translate(330 120) scale(.33333)">
        <path d={coast(isabela, 6)} />
        <path d={coast(fernandina, 4)} />
        <path d="M463 540l8 8-3 4 5 8-3 6 8 8M838 625l6-4 2 10 6-2M340 392v16M350 540l5 4-2 6M695 812l12 4M700 820l4 6" fill="none" stroke="#222" strokeWidth="3" />
        <path d="M828 1230l10 2-8 8 8 6M477 924h8M594 1318l6 6" fill="none" stroke="#222" strokeWidth="4" />
        <path d="M918 1300q0-14 12-16 14 2 14 14" fill="none" stroke="#333" strokeWidth="4" />
        <g fill="#333" stroke="none">
          <rect x="828" y="573" width="5" height="5" /><rect x="945" y="762" width="3" height="3" /><rect x="998" y="1100" width="6" height="5" /><rect x="1011" y="1099" width="6" height="5" /><rect x="1070" y="1100" width="4" height="4" /><path d="M1032 1122l4-8h8l3 7-6-2z" /><rect x="930" y="1244" width="3" height="3" /><rect x="678" y="1318" width="4" height="4" /><rect x="918" y="1304" width="4" height="4" /><rect x="933" y="1308" width="3" height="3" />
        </g>
      </g>
      <g transform="translate(630 210) scale(.33333)">
        <path d={coast(santiago, 5)} />
        <path d={coast(santaCruz, 5)} />
        <path d={coast(baltra, 3)} />
        <ellipse cx="698" cy="316" rx="11" ry="6" /><ellipse cx="399" cy="190" rx="9" ry="5" /><path d="M217 321L229 332 228 342 218 353 206 343 205 333Z" /><path d="M245 538L262 534 280 544 292 563 288 580 270 587 250 577 240 560Z" />
        <path d="M388 258v8M380 270l-3 14M372 290l-4 4M362 284l-6 4M386 194l8-2M305 341l6-2M420 452l6 2M436 432l2 5M706 326v8M630 735l6 4M645 436h8" fill="none" stroke="#333" strokeWidth="3" />
        <g fill="#333" stroke="none"><circle cx="599" cy="348" r="4.5" /><circle cx="623" cy="317" r="2.5" /><circle cx="614" cy="349" r="2" /><circle cx="357" cy="629" r="2.5" /><circle cx="370" cy="136" r="2" /><circle cx="61" cy="65" r="3" /><circle cx="84" cy="58" r="3" /><circle cx="482" cy="457" r="3" /><circle cx="438" cy="475" r="3" /><circle cx="411" cy="504" r="3" /><circle cx="705" cy="730" r="2.5" /><circle cx="46" cy="493" r="1.5" /></g>
      </g>
      <g transform="translate(765 615) scale(.33333)">
        <path d={coast(floreana, 5)} />
        <circle cx="281" cy="167" r="5" /><path d="M229 140l6-4" strokeWidth="5" />
        <g fill="#333" stroke="none"><circle cx="137" cy="36" r="2.5" /><circle cx="178" cy="59" r="2.5" /><circle cx="205" cy="52" r="2.5" /><circle cx="265" cy="183" r="2.5" /><circle cx="115" cy="47" r="4" /></g>
      </g>
    </svg>
  </div>
);

/* ---------- right dock ---------- */

const btn = "flex items-center justify-center rounded-[2px] border border-[#b3b3b3] bg-linear-to-b from-[#fdfdfd] to-[#ececec]";

const VTabs = () => (
  <div className="flex w-[38px] shrink-0 flex-col">
    <div className="flex h-[37px] items-center justify-center pt-[6px]">
      <svg width="24" height="22" viewBox="0 0 24 22"><path d="M22.5 2L16 9.5" stroke="#7d8f78" strokeWidth="3" /><path d="M9.5 4L18 12 15 15 7 8Z" fill="#9aa79a" /><path d="M1.5 10L8.5 5.5 11 9 5 13Z" fill="#d47c83" /><path d="M5 13L12 8.5 15 12 9 17Z" fill="#8fb5d8" /><path d="M9 17L15 12 16.5 14.5 12.5 20Z" fill="#98978e" /><path d="M1.5 10L9 17 6 18Z" fill="#7eb28a" /></svg>
    </div>
    <div className="flex flex-1 flex-col items-center bg-[#5e5e5e] pr-[5px] pt-px">
      <Cell className="h-[32px]"><Tag fill="#f7de4b" stroke="#d8b92c" text="abc" /></Cell>
      <Cell className="h-[32px]"><Svg size={26}><path d="M4 5.5Q9 2.5 14 5.5 22 4.5 23 10 24 15.5 18 16H6Q.5 15 1 10.5 1 6.5 4 5.5Z" fill="#d8e4f4" /><text x="3.2" y="13.8" fontFamily="DejaVu Sans, sans-serif" fontWeight="700" fontSize="9.2" letterSpacing="-0.4" fill="#222">abc</text></Svg></Cell>
      <Cell className="h-[32px]"><Svg><path d="M12 1.5L21.5 7 12 12.5 2.5 7Z" fill="#f27d7d" stroke="#8e1b1b" /><path d="M2.5 7L12 12.5V23L2.5 17Z" fill="#63c04b" stroke="#2b6d20" /><path d="M21.5 7L12 12.5V23L21.5 17Z" fill="#f6e04a" stroke="#8f7c15" /></Svg></Cell>
      <Cell className="h-[33px]"><Svg><path d="M12 3V17M6 17V6H18V17" stroke="#c98a4b" strokeWidth="2.6" /><rect x="8" y="1" width="8.5" height="6.5" fill="#e04b45" stroke="#a02d28" /><rect x="1.5" y="16" width="10" height="6.5" fill="#f6da4f" stroke="#b2942b" /><rect x="13" y="16" width="10" height="6.5" fill="#79a8dd" stroke="#4474aa" /></Svg></Cell>
      <Cell className="h-[31px]"><Svg><g transform="translate(1 0) scale(.6)"><g transform="translate(24 0) scale(-1 1)"><UndoPath fill="#6fb592" stroke="#4d8d6d" /></g></g><g transform="translate(9 8) scale(.62)"><UndoPath fill="#e8824a" stroke="#b35a28" /></g></Svg></Cell>
    </div>
  </div>
);

const StylePanel = () => (
  <div className="flex w-[467px] shrink-0 flex-col">
    <div className="flex h-[19px] items-center justify-between pl-[2px] pr-[2px]">
      <span>Estilo de capas</span>
      <DockButtons className="-mt-px" />
    </div>
    <div className="ml-px mr-[3px] mt-[2px] flex h-[24px] shrink-0 items-center rounded-[2px] border border-[#b3b3b3] bg-linear-to-b from-[#fdfdfd] to-[#ececec] pl-[6px] pt-px">
      <svg width="14" height="14" viewBox="0 0 14 14" fill="#ccc" stroke="#aaa" strokeWidth=".7"><circle cx="3.5" cy="5.5" r="1.2" /><circle cx="10.5" cy="2.5" r="1.2" /><circle cx="2" cy="11.5" r="1.2" /></svg>
      <span className="ml-[4px] tracking-[0.4px]">sitios_en_galapagos</span>
      <Tri className="ml-auto mr-1 w-[14px]" />
    </div>
    <div className="flex h-[541px] pt-px">
      <VTabs />
      <div className="flex flex-1 flex-col pl-[4px] pr-[3px]">
        <div className="mt-[5px] flex h-[24px] shrink-0 items-center rounded-[2px] border border-[#b3b3b3] bg-linear-to-b from-[#fdfdfd] to-[#ececec] pl-[6px]">
          <svg width="14" height="15" viewBox="0 0 14 15"><rect x=".5" y=".8" width="11" height="3.4" fill="#2d9fc6" stroke="#15506b" strokeWidth=".9" /><rect x="2.5" y="5.8" width="11" height="3.4" fill="#38a860" stroke="#164f2a" strokeWidth=".9" /><rect x=".5" y="10.8" width="10" height="3.4" fill="#a32014" stroke="#57100a" strokeWidth=".9" /></svg>
          <span className="ml-[4px]">Categorizado</span>
          <Tri className="ml-auto mr-1 w-[14px]" />
        </div>
        <div className="mt-[7px] flex h-[24px] shrink-0 items-center">
          <span className="w-[95px]">Valor</span>
          <div className="flex h-[24px] w-[297px] items-center rounded-[2px] border border-[#b3b3b3] bg-white">
            <span className="ml-[3px] w-[20px] text-[9px] font-bold tracking-[-0.4px] text-[#555]">abc</span>
            <span>Zona</span>
            <div className="ml-auto flex h-full w-[20px] items-center justify-center border-l border-[#b3b3b3] bg-[#f6f6f6]"><Tri /></div>
          </div>
          <div className={btn + " ml-auto h-[24px] w-[24px]"}><span className="-mt-[3px] text-[20px] leading-none text-[#5b3a68] [font-family:'Liberation_Serif',serif]">ε</span></div>
        </div>
        <div className="mt-[6px] flex h-[27px] shrink-0 items-center">
          <span className="w-[95px]">Símbolo</span>
          <div className={btn + " h-[27px] w-[315px] pr-[2px]"}><svg width="10" height="10" viewBox="0 0 10 10"><circle cx="5" cy="5" r="3.9" fill="#9a7cb4" stroke="#453a4e" /></svg></div>
          <div className={btn + " h-[27px] w-[12px]"}><Tri className="w-2" /></div>
        </div>
        <div className="mt-[6px] flex h-[24px] shrink-0 items-center">
          <span className="w-[95px] whitespace-nowrap">Rampa de color</span>
          <div className={btn + " h-[24px] w-[315px] pr-[3px] text-[11px] tracking-[-0.25px]"}>Random colors</div>
          <div className={btn + " h-[24px] w-[12px]"}><Tri className="w-2" /></div>
        </div>
        <div className="mt-[6px] flex h-[327px] shrink-0 flex-col border border-[#b3b3b3] bg-white">
          <div className="flex h-[20px] shrink-0 items-center border-b border-[#c4c4c4] bg-linear-to-b from-[#fdfdfd] to-[#efefef]">
            <div className="flex h-full w-[69px] items-center border-r border-[#cfcfcf] pl-[2px]">Símbolo<Tri className="mb-[3px] ml-[7px]" /></div>
            <div className="flex h-full w-[53px] items-center border-r border-[#cfcfcf] pl-[2px]">Valor</div>
            <div className="pl-[2px]">Leyenda</div>
          </div>
        </div>
        <div className="mt-[5px] flex h-[25px] shrink-0">
          <div className="flex w-[80px] items-center justify-center rounded-[2px] border border-[#6ea3d4] bg-[#ccd3da]">Clasificar</div>
          <div className={btn + " ml-[5px] w-[28px]"}><svg width="15" height="15" viewBox="0 0 15 15"><path d="M5.5 1H9.5V5.5H14V9.5H9.5V14H5.5V9.5H1V5.5H5.5Z" fill="#e4f2e4" stroke="#4c9157" /><path d="M7.5 3V12M3 7.5H12" stroke="#4c9157" strokeWidth="1.6" /></svg></div>
          <div className={btn + " ml-[6px] w-[28px]"}><svg width="15" height="7" viewBox="0 0 15 7"><rect x=".5" y=".5" width="14" height="5.5" fill="#fbe2e2" stroke="#d96767" /><path d="M2.5 3.2H12.5" stroke="#c93b3b" strokeWidth="1.8" /></svg></div>
          <div className={btn + " ml-[6px] w-[80px]"}>Borrar todo</div>
          <div className={btn + " ml-auto w-[80px]"}>Avanzado<svg className="ml-[7px]" width="6" height="4" viewBox="0 0 6 4"><path d="M0 0H6L3 3.5Z" fill="#666" /></svg></div>
        </div>
        <div className="mt-[5px] flex h-[20px] shrink-0 items-center font-bold tracking-[0.45px]">
          <svg className="ml-[5px] mr-[9px]" width="8" height="10" viewBox="0 0 8 10"><path d="M.5 0L7.5 5 .5 10Z" fill="#333" /></svg>
          Representación de capas
        </div>
        <div className="mt-[4px] flex h-[24px] shrink-0 items-center">
          <div className={btn + " h-[23px] w-[24px]"}><Svg size={15}><UndoPath fill="#e8824a" stroke="#c8642e" /></Svg></div>
          <div className={btn + " ml-[6px] h-[23px] w-[24px]"}><Svg size={15}><g transform="translate(24 0) scale(-1 1)"><UndoPath fill="#7db98b" stroke="#549465" /></g></Svg></div>
          <div className="ml-auto flex items-center"><Check /><span className="ml-[5px] w-[130px] whitespace-nowrap tracking-[0.2px]">Actualización en vivo</span></div>
          <div className={btn + " h-[24px] w-[80px]"}>Aplicar</div>
        </div>
      </div>
    </div>
    <div className="-ml-[2px] flex h-[30px] items-start pt-[4px]">
      <div className="flex h-[26px] w-[109px] items-center justify-center rounded-b-[3px] border border-t-0 border-[#b5b5b5] bg-[#f5f5f5] pt-px">Estilo de capas</div>
      <div className="flex h-[24px] w-[220px] items-center justify-center rounded-b-[3px] border border-[#b5b5b5] bg-[#dcdcdc] tracking-[0.35px]">Caja de herramientas de Procesos</div>
      <div className="h-px flex-1 bg-[#b5b5b5]" />
    </div>
  </div>
);

/* ---------- status bar ---------- */

const field = "flex h-[24px] shrink-0 items-center rounded-[2px] border border-[#b3b3b3] bg-white";
const Spin = () => (
  <div className="ml-auto flex h-full w-[14px] items-center justify-center border-l border-[#c4c4c4] bg-[#f6f6f6]">
    <svg width="8" height="14" viewBox="0 0 8 14" fill="#555"><path d="M0 4.5L4 .5 8 4.5ZM0 9.5H8L4 13.5Z" /></svg>
  </div>
);

const StatusBar = () => (
  <div className="flex h-[30px] items-center pl-1 pt-[2px] leading-[18px]">
    <div className={field + " w-[253px] pl-[7px] text-[#7f7f7f]"}>
      <svg width="14" height="14" viewBox="0 0 14 14" fill="none" stroke="#8a8a8a" strokeWidth="1.3"><circle cx="5.5" cy="5.5" r="4.2" /><path d="M8.6 8.6L13 13" /></svg>
      <span className="ml-[7px] pt-px tracking-[0.28px]">Escriba para localizar (Ctrl+K)</span>
    </div>
    <div className="w-[265px] pr-[3px] pt-px text-right">Coordenada</div>
    <div className={field + " w-[100px] justify-center pt-px"}>-90.240,-0.438</div>
    <Cell className="w-[26px]"><svg width="18" height="18" viewBox="0 0 18 18" fill="none" stroke="#333" strokeWidth="1.2"><path d="M2 3Q4 0 7 4L11 10M1.5 6Q3 10 6 11M5 1.5Q8 1 9.5 5L10 7M3 3L8 10M7 11Q6 15 10 16.5 14.5 16.5 15 12.5 14 8.5 10 9 7.5 9.5 7 11Z" /><path d="M9 11L13 14.5M13 10.5L10 14M5 5L6 3" strokeWidth="1.4" /><path d="M13 4L16 1M14 6.5H17" stroke="#777" /></svg></Cell>
    <div className="w-[46px] pl-[7px] pt-px">Escala</div>
    <div className={field + " w-[90px] pl-[3px]"}><span className="pt-px">1:1095186</span><div className="ml-auto flex h-full w-[20px] items-center justify-center border-l border-[#b3b3b3] bg-[#f6f6f6]"><Tri /></div></div>
    <Cell className="w-[33px] pl-[2px]"><svg width="13" height="17" viewBox="0 0 13 17"><path d="M3 8V4.5Q3 1.2 6.5 1.2T10 4.5V8" stroke="#8a8a8a" strokeWidth="1.5" fill="none" /><rect x=".8" y="7.5" width="11.4" height="8.5" rx="1.2" fill="#5c5c5c" /></svg></Cell>
    <div className="w-[74px] whitespace-nowrap pt-px tracking-[0.22px]">Amplificador</div>
    <div className={field + " w-[84px] pl-[4px]"}><span className="pt-px">100%</span><Spin /></div>
    <div className="w-[66px] pl-[9px] pt-px">Rotación</div>
    <div className={field + " w-[84px] pl-[4px]"}><span className="pt-px">0.0 °</span><Spin /></div>
    <div className="ml-[6px] flex items-center"><Check /><span className="ml-[5px] w-[85px] pt-px">Representar</span></div>
    <svg width="16" height="15" viewBox="0 0 16 15" fill="none" stroke="#777" strokeWidth="1"><path d="M8 .8L13 3 15.3 7.5 13 12 8 14.2 3 12 .7 7.5 3 3Z" fill="#bbb" strokeDasharray="2 1" /><path d="M8 1V14M1 7.5H15M3 4.3H13M3 10.7H13M8 1Q2 7.5 8 14M8 1Q14 7.5 8 14" /></svg>
    <div className="ml-[2px] pt-px">EPSG:4326</div>
    <svg className="ml-auto mr-[6px]" width="18" height="17" viewBox="0 0 18 17"><path d="M9 .8Q17 1.2 17 7.5 17 11 13.6 12.6L14.5 16.5 9.8 13.6Q1 14 1 7.5 1 1.2 9 .8Z" fill="#666" /></svg>
  </div>
);

/* ---------- numbered callouts ---------- */

const num = "absolute leading-none tracking-normal text-[#ff0a37] [font-family:'Liberation_Serif',serif] ";
const ring = "absolute border-[4px] border-[#ff0a37] ";

const Callouts = () => (
  <div className="pointer-events-none absolute inset-0 overflow-hidden">
    <div className={ring + "left-0 top-[137px] h-[39px] w-[34px] rounded-[12px]"} />
    <div className={ring + "left-[14px] top-[186px] h-[28px] w-[198px] rounded-[14px]"} />
    <div className={ring + "left-[928px] top-[165px] h-[39px] w-[438px] rounded-[12px]"} />
    <div className={ring + "left-[1024px] top-[202px] h-[31px] w-[313px] rounded-[12px]"} />
    <div className={ring + "left-[1027px] top-[230px] h-[33px] w-[331px] rounded-[12px]"} />
    <div className={ring + "left-[928px] top-[619px] h-[46px] w-[100px] rounded-[12px]"} />
    <div className={num + "left-[37px] top-[111px] text-[33px] font-bold"}>8</div>
    <div className={num + "left-[211px] top-[167px] text-[33px]"}>7</div>
    <div className={num + "left-[1242px] top-[128px] text-[34px] font-bold"}>9</div>
    <div className={num + "left-[985px] top-[214px] text-[34px] font-bold"}>10</div>
    <div className={num + "left-[1070px] top-[268px] text-[27px] font-bold"}>12</div>
    <div className={num + "left-[1027px] top-[587px] text-[34px] font-bold"}>11</div>
    <svg className="absolute left-[980px] top-[638px]" width="14" height="20" viewBox="0 0 14 20"><path d="M1 1V16L4.6 12.8 7.2 18.6 9.8 17.4 7.3 11.8H12Z" fill="#fff" stroke="#777" /></svg>
  </div>
);

export default function App() {
  return (
    <div className="relative flex h-[768px] w-[1364px] flex-col overflow-hidden bg-[#f0f0f0] text-[12px] leading-[16px] tracking-[0.3px] text-[#1a1a1a] [font-family:'DejaVu_Sans_Condensed','DejaVu_Sans','Noto_Sans',sans-serif] [font-stretch:condensed]">
      <div className="flex h-[23px] shrink-0 items-center bg-white pl-[2px]">
        <svg width="16" height="16" viewBox="0 0 16 16" fill="none"><circle cx="7.5" cy="7.8" r="5.6" stroke="#6ba52f" strokeWidth="3.4" /><path d="M8 8L14.8 14.8" stroke="#6ba52f" strokeWidth="3" /><path d="M7 7L11.5 11.5" stroke="#f08c2e" strokeWidth="2.6" /></svg>
        <span className="ml-[5px] text-[12px] tracking-[-0.47px] [font-family:'Noto_Sans',sans-serif] [font-stretch:normal]">*Galápagos — QGIS [recording]</span>
        <svg className="mb-[3px] ml-auto mr-[18px]" width="104" height="12" viewBox="0 0 104 12" fill="none" stroke="#111"><path d="M1 6.5H10M46.5 3.5H54.5V10.5H46.5ZM48.5 3.5V1.5H56.5V8.5H54.5M92 1L102 11M102 1L92 11" /></svg>
      </div>
      <div className="flex h-[20px] shrink-0 items-center bg-[#efefef] pl-[10px] pt-px tracking-[0.14px]">
        {menu.map(([a, u, b, w]) => (
          <div key={a + u + b} className={"shrink-0 whitespace-nowrap " + w}>{a}<span className="underline underline-offset-2">{u}</span>{b}</div>
        ))}
      </div>
      <div className="flex h-[39px] shrink-0 items-center border-t border-[#d0d0d0] bg-linear-to-b from-[#fafafa] to-[#ededed]">
        <Handle className="w-3 pl-[3px]" />
        <Cell><NewFile /></Cell><Cell><Folder /></Cell><Cell><Save /></Cell><Cell><NewLayout /></Cell><Cell><LayoutManager /></Cell><Cell><StyleManager /></Cell>
        <Handle className="w-4 pl-[3px]" />
        <Cell><div className="flex h-[31px] w-[32px] items-center justify-center rounded-[2px] border border-[#a8a8a8] bg-[#d9d9d9]"><Hand /></div></Cell>
        <Cell><PanSelection /></Cell><Cell><ZoomIn /></Cell><Cell><ZoomOut /></Cell><Cell><ZoomFull /></Cell><Cell><ZoomSel /></Cell><Cell><ZoomLayer /></Cell><Cell><ZoomNative /></Cell><Cell><ZoomLast /></Cell><Cell><ZoomNext /></Cell><Cell><NewMap /></Cell><Cell><New3D /></Cell><Cell><NewBookmark /></Cell><Cell><ShowBookmarks /></Cell><Cell><Clock /></Cell><Cell><Refresh /></Cell>
        <Handle className="w-4 pl-[3px]" />
        <Cell className="w-[31px]"><SelectFeat /></Cell><Tri className="w-[13px]" /><Cell><SelectValue /></Cell><Tri /><Cell><Deselect /></Cell><Tri /><Cell className="w-[34px]"><SelectLoc /></Cell>
        <Handle className="w-[15px]" />
        <Cell><Identify /></Cell><Cell><Abacus /></Cell><Cell><Gear /></Cell><Cell><Sigma /></Cell><Cell><Table /></Cell><Tri className="w-[11px]" /><Cell className="w-[33px]"><Ruler /></Cell><Tri /><Cell className="w-[34px]"><Tip /></Cell><Cell><Action /></Cell><Tri fill="#aaa" />
      </div>
      <div className="flex h-[41px] shrink-0 items-center border-b border-t border-[#b9b9b9] bg-linear-to-b from-[#fafafa] to-[#ededed] pb-[2px]">
        <Handle className="w-3 pl-[3px]" />
        <Cell><DataSource /></Cell><Cell><GeoPackage /></Cell><Cell><Shape /></Cell><Cell><Feather /></Cell><Cell><Chip /></Cell><Cell><Mesh /></Cell>
        <Sep className="w-[9px]" /><Cell className="w-[31px]"><Virtual /></Cell><Sep className="w-[9px]" />
        <Handle className="w-[14px] pl-[2px]" />
        <Cell><CurrentEdits /></Cell><Cell><ToggleEdit /></Cell><Cell><SaveEdits /></Cell><Cell><AddPoint /></Cell><Cell><VertexTool /></Cell><Tri className="w-[11px]" fill="#999" />
        <Cell><ModifyAttrs /></Cell><Cell><Trash /></Cell><Cell><Cut /></Cell><Cell><Copy /></Cell><Cell><Paste /></Cell><Cell><Undo /></Cell><Cell><Redo /></Cell>
        <Handle className="w-4 pl-[5px]" />
        <Cell><LabelYellow /></Cell><Cell><DiagramIcon /></Cell><Sep className="w-2" /><Cell className="w-[32px]"><LabelPin /></Cell><Cell className="w-[32px]"><LabelRed /></Cell><Sep className="w-[9px]" />
        <Cell className="w-[32px]"><GrayTag kind="pin" /></Cell><Cell><GrayTag kind="eye" /></Cell><Cell><GrayTag kind="move" /></Cell><Cell><GrayTag kind="rotate" /></Cell><Cell><GrayTag kind="edit" /></Cell>
        <Handle className="w-[17px]" /><Cell><MetaSearch /></Cell><Handle className="w-[15px]" /><Cell><Python /></Cell><Handle className="w-4" /><Cell><Help /></Cell><Handle className="w-[18px]" />
      </div>
      <div className="flex h-[615px] shrink-0 bg-[#f0f0f0]">
        <LayersPanel />
        <div className="flex w-[6px] shrink-0 items-center justify-center"><div className="h-4 border-l border-dotted border-[#aaa]" /></div>
        <MapCanvas />
        <div className="flex w-[8px] shrink-0 items-center justify-center"><div className="h-4 border-l border-dotted border-[#aaa]" /></div>
        <StylePanel />
      </div>
      <StatusBar />
      <Callouts />
    </div>
  );
}
